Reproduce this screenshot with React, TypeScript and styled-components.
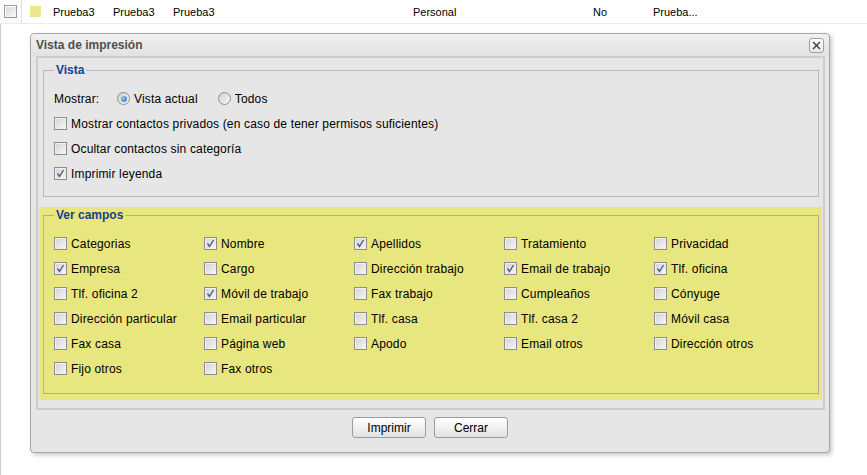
import React from 'react';
import styled, { createGlobalStyle } from 'styled-components';

const GlobalStyle = createGlobalStyle`
  html, body {
    margin: 0;
    padding: 0;
    background: #fff;
  }
  body {
    font-family: "Liberation Sans", Arial, sans-serif;
    font-size: 12px;
    color: #000;
  }
`;

const Page = styled.div`
  position: relative;
  width: 867px;
  height: 475px;
  overflow: hidden;
  background: #fff;
`;

const GridRow = styled.div`
  display: grid;
  grid-template-columns: 22px 31px 60px 60px 240px 180px 60px 1fr;
  height: 23px;
  align-items: center;
  border-bottom: 1px solid #ececec;
  font-size: 11px;
`;

const CheckCell = styled.div`
  height: 23px;
  display: flex;
  align-items: center;
  justify-content: center;
  border-right: 1px solid #e0e0e0;
  background: #fafafa;
`;

const RowCheck = styled.span`
  width: 11px;
  height: 11px;
  border: 1px solid #9a9a9a;
  background: linear-gradient(135deg, #d4d4d4, #fbfbfb);
  box-shadow: inset 1px 1px 0 #fff;
`;

const ColorCell = styled.div`
  display: flex;
  padding-left: 8px;
`;

const Swatch = styled.span`
  width: 11px;
  height: 11px;
  background: #ece68c;
`;

const Cell = styled.div`
  white-space: nowrap;
`;

const Below = styled.div`
  height: 451px;
  border-left: 1px solid #cfcfcf;
`;

const Dialog = styled.div`
  position: absolute;
  left: 30px;
  top: 33px;
  width: 798px;
  height: 418px;
  border: 1px solid #a6a6a6;
  border-radius: 4px;
  background: #e6e6e6;
  box-shadow: 2px 2px 4px rgba(0, 0, 0, 0.22);
  display: flex;
  flex-direction: column;
`;

const Header = styled.div`
  height: 22px;
  display: flex;
  align-items: center;
  justify-content: space-between;
  padding: 0 5px;
  background: linear-gradient(#f0f0f0, #e2e2e2);
  border-radius: 4px 4px 0 0;
`;

const Title = styled.span`
  font-weight: bold;
  color: #4f4f4f;
  font-size: 12px;
`;

const CloseButton = styled.span`
  box-sizing: border-box;
  width: 15px;
  height: 15px;
  border: 1px solid #a0a0a0;
  border-radius: 3px;
  background: linear-gradient(#ffffff, #e8e8e8);
  display: flex;
  align-items: center;
  justify-content: center;
`;

const InnerBox = styled.div`
  box-sizing: border-box;
  margin: 0 4px 0 5px;
  height: 354px;
  border: 2px solid #cdcdcd;
  padding: 5px 1px 0 1px;
  letter-spacing: 0.16px;
`;

const Fieldset = styled.fieldset<{ $border: string; $top: number; $bottom: number }>`
  margin: 0 3px 0 4px;
  border: 1px solid ${(p) => p.$border};
  padding: ${(p) => p.$top}px 10px ${(p) => p.$bottom}px 10px;
  min-width: 0;
`;

const Legend = styled.legend`
  font-weight: bold;
  color: #15428b;
  font-size: 12px;
  padding: 0 2px;
  line-height: 14px;
  letter-spacing: 0;
`;

const Line = styled.div`
  height: 25px;
  display: flex;
  align-items: center;
`;

const FieldLabel = styled.span`
  width: 63px;
`;

const Option = styled.label`
  display: flex;
  align-items: center;
  gap: 4px;
  margin-right: 20px;
`;

const Yellow = styled.div`
  margin-top: 10px;
  background: #e8e67e;
  padding: 1px 0 6px 0;
`;

const FieldGrid = styled.div`
  display: grid;
  grid-template-columns: repeat(5, 150px);
  grid-auto-rows: 25px;
`;

const Item = styled.label`
  display: flex;
  align-items: center;
  gap: 4px;
  white-space: nowrap;
`;

const Box = styled.span`
  box-sizing: border-box;
  width: 13px;
  height: 13px;
  border: 1px solid #8e8e8e;
  background: linear-gradient(135deg, #d2d2d2, #f7f7f7);
  box-shadow: inset 1px 1px 0 rgba(255, 255, 255, 0.6);
  display: flex;
  align-items: center;
  justify-content: center;
  flex-shrink: 0;
`;

const Radio = styled.span`
  box-sizing: border-box;
  width: 13px;
  height: 13px;
  border-radius: 50%;
  border: 1px solid #8e8e8e;
  background: linear-gradient(135deg, #cfcfcf, #f8f8f8);
  display: flex;
  align-items: center;
  justify-content: center;
`;

const Dot = styled.span`
  width: 6px;
  height: 6px;
  border-radius: 50%;
  background: radial-gradient(circle at 35% 35%, #8ccaf4, #1a64b8);
`;

const Footer = styled.div`
  flex: 1;
  display: flex;
  justify-content: center;
  gap: 8px;
  padding-top: 7px;
`;

const Button = styled.button`
  width: 74px;
  height: 21px;
  border: 1px solid #9c9c9c;
  border-radius: 3px;
  background: linear-gradient(#ffffff, #e2e2e2);
  font-family: "Liberation Sans", Arial, sans-serif;
  font-size: 12px;
  color: #000;
  padding: 0;
`;

const Check: React.FC<{ checked?: boolean }> = ({ checked }) => (
  <Box>
    {checked && (
      <svg width="9" height="9" viewBox="0 0 9 9">
        <path d="M1.5 4.5 L3.5 7.5 L7.5 1" fill="none" stroke="#4b5a82" strokeWidth="1.4" />
      </svg>
    )}
  </Box>
);

const fields: [string, boolean][] = [
  ['Categorias', false], ['Nombre', true], ['Apellidos', true], ['Tratamiento', false], ['Privacidad', false],
  ['Empresa', true], ['Cargo', false], ['Dirección trabajo', false], ['Email de trabajo', true], ['Tlf. oficina', true],
  ['Tlf. oficina 2', false], ['Móvil de trabajo', true], ['Fax trabajo', false], ['Cumpleaños', false], ['Cónyuge', false],
  ['Dirección particular', false], ['Email particular', false], ['Tlf. casa', false], ['Tlf. casa 2', false], ['Móvil casa', false],
  ['Fax casa', false], ['Página web', false], ['Apodo', false], ['Email otros', false], ['Dirección otros', false],
  ['Fijo otros', false], ['Fax otros', false],
];

export default function App() {
  return (
    <Page>
      <GlobalStyle />
      <GridRow>
        <CheckCell><RowCheck /></CheckCell>
        <ColorCell><Swatch /></ColorCell>
        <Cell>Prueba3</Cell>
        <Cell>Prueba3</Cell>
        <Cell>Prueba3</Cell>
        <Cell>Personal</Cell>
        <Cell>No</Cell>
        <Cell>Prueba...</Cell>
      </GridRow>
      <Below />

      <Dialog>
        <Header>
          <Title>Vista de impresión</Title>
          <CloseButton>
            <svg width="9" height="9" viewBox="0 0 9 9">
              <path d="M1 1 L8 8 M8 1 L1 8" stroke="#3a3a3a" strokeWidth="1.4" />
            </svg>
          </CloseButton>
        </Header>
        <InnerBox>
          <Fieldset $border="#b5b8c8" $top={9} $bottom={10}>
            <Legend>Vista</Legend>
            <Line>
              <FieldLabel>Mostrar:</FieldLabel>
              <Option><Radio><Dot /></Radio>Vista actual</Option>
              <Option><Radio />Todos</Option>
            </Line>
            <Line><Item><Check />Mostrar contactos privados (en caso de tener permisos suficientes)</Item></Line>
            <Line><Item><Check />Ocultar contactos sin categoría</Item></Line>
            <Line><Item><Check checked />Imprimir leyenda</Item></Line>
          </Fieldset>
          <Yellow>
            <Fieldset $border="#aeae9a" $top={9} $bottom={12}>
              <Legend>Ver campos</Legend>
              <FieldGrid>
                {fields.map(([name, on]) => (
                  <Item key={name}><Check checked={on} />{name}</Item>
                ))}
              </FieldGrid>
            </Fieldset>
          </Yellow>
        </InnerBox>
        <Footer>
          <Button>Imprimir</Button>
          <Button>Cerrar</Button>
        </Footer>
      </Dialog>
    </Page>
  );
}
